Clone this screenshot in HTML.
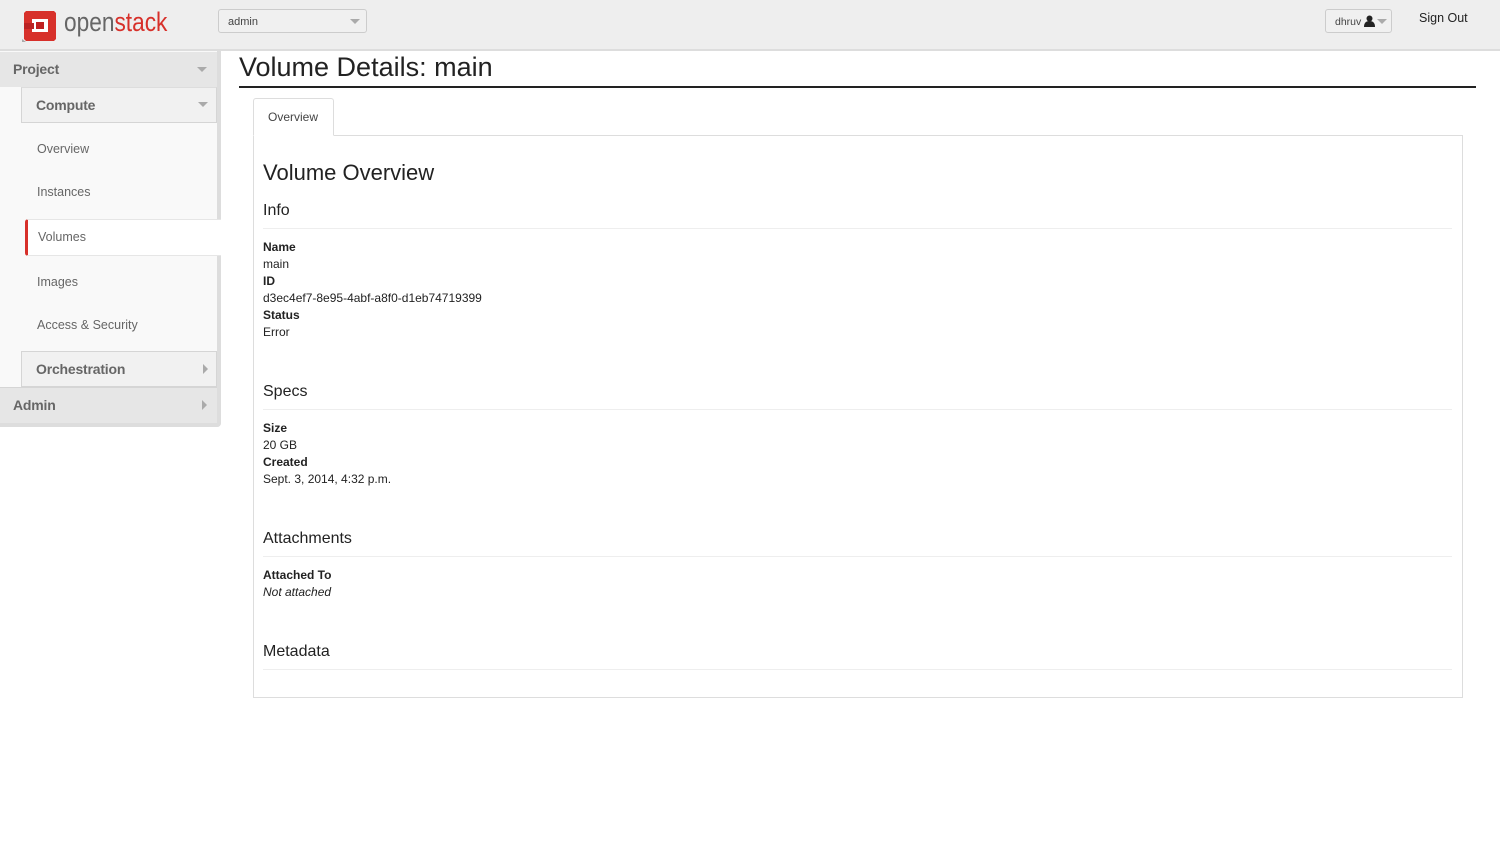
<!DOCTYPE html>
<html><head><style>
*{margin:0;padding:0;box-sizing:border-box}
body{width:1500px;height:843px;background:#fff;font-family:"Liberation Sans",sans-serif;color:#333;position:relative;overflow:hidden}
.top{position:absolute;left:0;top:0;width:1500px;height:51px;background:#eee;border-bottom:2px solid #ddd}
.abs{position:absolute}
.side{position:absolute;left:0;top:51px;width:221px;height:376px;background:#f9f9f9;border-right:4px solid #ddd;border-bottom:4px solid #ddd;border-radius:0 0 4px 0}
.hdr{position:absolute;font-weight:bold;font-size:14px;color:#666;letter-spacing:-0.2px}
.item{position:absolute;left:37px;font-size:12.5px;color:#666}
.tri-d{position:absolute;width:0;height:0;border-left:5px solid transparent;border-right:5px solid transparent;border-top:5px solid #aaa}
.tri-r{position:absolute;width:0;height:0;border-top:5px solid transparent;border-bottom:5px solid transparent;border-left:5px solid #aaa}
.lbl{position:absolute;left:263px;font-size:12px;font-weight:bold;color:#222}
.val{position:absolute;left:263px;font-size:12px;color:#222}
.h4{position:absolute;left:263px;font-size:16px;color:#222}
.hr{position:absolute;left:263px;width:1189px;height:1px;background:#eee}
</style></head><body>
<div class="top"></div>
<svg class="abs" style="left:20px;top:9px" width="38" height="34" viewBox="0 0 38 34">
<path d="M6 2h28l2 2v26l-2 2H6L4 30V4z" fill="#d7302a"/>
<rect x="12" y="10" width="16" height="13" fill="#fff"/>
<rect x="16" y="13" width="8" height="7" fill="#c02020"/>
<rect x="4" y="14" width="10" height="6" fill="#b22"/>
<path d="M2 30l4 3h-4z" fill="#aaa"/>
</svg>
<div class="abs" style="left:64px;top:7px;font-size:27px;color:#666;transform:scaleX(0.84);transform-origin:left;white-space:nowrap">open<span style="color:#d7302a">stack</span></div>
<div class="abs" style="left:218px;top:9px;width:149px;height:24px;border:1px solid #ccc;border-radius:3px;background:#f0f0f0;font-size:11px;padding:6px 9px;color:#444">admin</div>
<div class="tri-d" style="left:350px;top:19px"></div>
<div class="abs" style="left:1325px;top:9px;width:67px;height:24px;border:1px solid #ccc;border-radius:3px;background:#f0f0f0;font-size:10.5px;padding:6px 9px;color:#444">dhruv</div>
<svg class="abs" style="left:1364px;top:15px" width="11" height="12"><circle cx="5.5" cy="3.5" r="3" fill="#222"/><path d="M0 12q0-6 5.5-6t5.5 6z" fill="#222"/></svg>
<div class="tri-d" style="left:1377px;top:19px"></div>
<div class="abs" style="left:1419px;top:11px;font-size:12.5px;color:#222">Sign Out</div>

<div class="side"></div>
<div class="abs" style="left:0;top:52px;width:217px;height:35px;background:#e6e6e6"></div>
<div class="hdr" style="left:13px;top:61px">Project</div>
<div class="tri-d" style="left:197px;top:67px"></div>
<div class="abs" style="left:21px;top:87px;width:196px;height:36px;background:#f1f1f1;border:1px solid #d5d5d5;border-top:1px solid #ddd"></div>
<div class="hdr" style="left:36px;top:97px">Compute</div>
<div class="tri-d" style="left:198px;top:102px"></div>
<div class="item" style="top:142px">Overview</div>
<div class="item" style="top:185px">Instances</div>
<div class="abs" style="left:25px;top:219px;width:196px;height:37px;background:#fff;border-left:3px solid #d7302a;border-radius:3px 0 0 3px;border-bottom:1px solid #e6e6e6;border-top:1px solid #e6e6e6"></div>
<div class="item" style="top:230px;left:38px">Volumes</div>
<div class="item" style="top:275px">Images</div>
<div class="item" style="top:318px">Access &amp; Security</div>
<div class="abs" style="left:21px;top:351px;width:196px;height:36px;background:#f1f1f1;border:1px solid #d5d5d5"></div>
<div class="hdr" style="left:36px;top:361px">Orchestration</div>
<div class="tri-r" style="left:203px;top:364px"></div>
<div class="abs" style="left:0;top:387px;width:217px;height:36px;background:#e6e6e6;border-top:1px solid #d5d5d5"></div>
<div class="hdr" style="left:13px;top:397px">Admin</div>
<div class="tri-r" style="left:202px;top:400px"></div>

<div class="abs" style="left:239px;top:52px;font-size:27px;color:#222;white-space:nowrap">Volume Details: main</div>
<div class="abs" style="left:239px;top:86px;width:1237px;height:2px;background:#222"></div>
<div class="abs" style="left:253px;top:135px;width:1210px;height:563px;border:1px solid #ddd"></div>
<div class="abs" style="left:253px;top:98px;width:81px;height:38px;border:1px solid #ddd;border-bottom:1px solid #fff;background:#fff;border-radius:3px 3px 0 0;font-size:12px;padding:11px 0 0 14px;color:#444">Overview</div>
<div class="abs" style="left:263px;top:160px;font-size:22px;color:#222">Volume Overview</div>
<div class="h4" style="top:202px">Info</div><div class="hr" style="top:228px"></div>
<div class="lbl" style="top:240px">Name</div>
<div class="val" style="top:257px">main</div>
<div class="lbl" style="top:274px">ID</div>
<div class="val" style="top:291px">d3ec4ef7-8e95-4abf-a8f0-d1eb74719399</div>
<div class="lbl" style="top:308px">Status</div>
<div class="val" style="top:325px">Error</div>
<div class="h4" style="top:383px">Specs</div><div class="hr" style="top:409px"></div>
<div class="lbl" style="top:421px">Size</div>
<div class="val" style="top:438px">20 GB</div>
<div class="lbl" style="top:455px">Created</div>
<div class="val" style="top:472px">Sept. 3, 2014, 4:32 p.m.</div>
<div class="h4" style="top:530px">Attachments</div><div class="hr" style="top:556px"></div>
<div class="lbl" style="top:568px">Attached To</div>
<div class="val" style="top:585px;font-style:italic">Not attached</div>
<div class="h4" style="top:643px">Metadata</div><div class="hr" style="top:669px"></div>
</body></html>
